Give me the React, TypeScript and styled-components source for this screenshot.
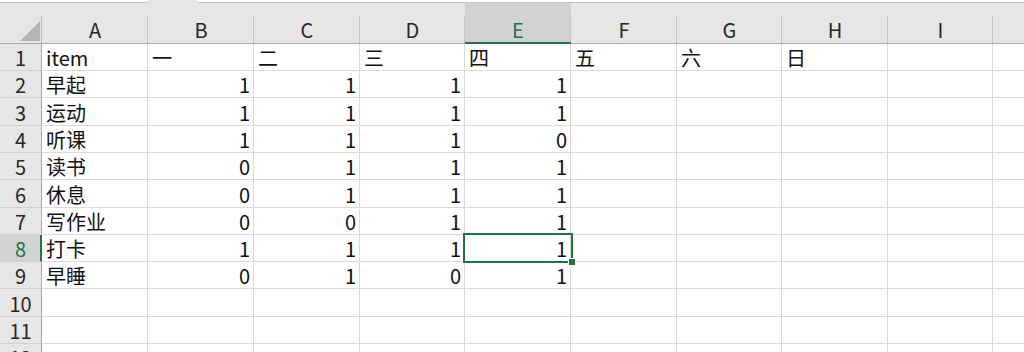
import React from 'react'
import styled, { createGlobalStyle } from 'styled-components'

const GlobalStyle = createGlobalStyle`
    html, body {
        margin: 0;
        padding: 0;
        background: #fff;
        overflow: hidden;
    }
    body {
        font-family: "Noto Sans CJK SC", "Noto Sans", sans-serif;
    }
`;

const GREEN = "#217346";

// last column only peeks in at the right edge, its letter is off screen
const colNames = ["A", "B", "C", "D", "E", "F", "G", "H", "I", ""];
const colWidths = [106, 106, 106, 105, 106, 106, 105, 106, 105, 106];
const rowHeights = [27, 27, 28, 27, 27, 28, 27, 27, 27, 28, 27, 27];

const selCol = 4;
const selRow = 7;

const data: (string | number)[][] = [
    ["item", "一", "二", "三", "四", "五", "六", "日"],
    ["早起", 1, 1, 1, 1],
    ["运动", 1, 1, 1, 1],
    ["听课", 1, 1, 1, 0],
    ["读书", 0, 1, 1, 1],
    ["休息", 0, 1, 1, 1],
    ["写作业", 0, 0, 1, 1],
    ["打卡", 1, 1, 1, 1],
    ["早睡", 0, 1, 0, 1],
];

const Page = styled.div`
    width: 1024px;
    height: 352px;
    overflow: hidden;
    background: #e6e6e6;
`;

const TopStrip = styled.div`
    display: flex;
    gap: 49px;
    height: 3px;
`;

const StripBox = styled.div<{ $w?: number }>`
    ${(p) => p.$w ? `width: ${p.$w}px;` : "flex: 1;"}
    height: 3px;
    box-sizing: border-box;
    background: #fff;
    border-bottom: 1px solid #c6c6c6;
`;

const HeaderRow = styled.div`
    display: flex;
    height: 41px;
    white-space: nowrap;
`;

const Corner = styled.div`
    flex: none;
    width: 42px;
    height: 100%;
    box-sizing: border-box;
    border-bottom: 1px solid #ababab;
    background: linear-gradient(#bcbcbc, #bcbcbc) right bottom / 1px 27px no-repeat, #e6e6e6;
    display: flex;
    align-items: flex-end;
    justify-content: flex-end;
    padding: 0 2px 2px 0;
`;

const ColHead = styled.div<{ $w: number; $sel?: boolean }>`
    flex: none;
    width: ${(p) => p.$w}px;
    height: 100%;
    box-sizing: border-box;
    border-bottom: ${(p) => p.$sel ? `2px solid ${GREEN}` : "1px solid #ababab"};
    background: linear-gradient(#c4c4c4, #c4c4c4) right bottom / 1px 27px no-repeat,
        ${(p) => p.$sel ? "#d2d2d2" : "#e6e6e6"};
    color: ${(p) => p.$sel ? GREEN : "#262626"};
    font-size: 20px;
    line-height: 24px;
    display: flex;
    align-items: flex-end;
    justify-content: center;
    padding-bottom: ${(p) => p.$sel ? 0 : 1}px;
`;

const Body = styled.div`
    position: relative;
`;

const Row = styled.div<{ $h: number }>`
    display: flex;
    height: ${(p) => p.$h}px;
    white-space: nowrap;
`;

const RowHead = styled.div<{ $sel?: boolean }>`
    flex: none;
    width: 42px;
    box-sizing: border-box;
    background: ${(p) => p.$sel ? "#d2d2d2" : "#e6e6e6"};
    border-right: ${(p) => p.$sel ? `2px solid ${GREEN}` : "1px solid #ababab"};
    border-bottom: 1px solid #d0d0d0;
    color: ${(p) => p.$sel ? GREEN : "#262626"};
    font-size: 20px;
    line-height: 24px;
    display: flex;
    align-items: flex-end;
    justify-content: center;
    padding-left: ${(p) => p.$sel ? 1 : 0}px;
`;

const Cell = styled.div<{ $w: number; $num?: boolean }>`
    flex: none;
    width: ${(p) => p.$w}px;
    box-sizing: border-box;
    background: #fff;
    border-right: 1px solid #dadada;
    border-bottom: 1px solid #dadada;
    color: #111;
    font-size: 20px;
    line-height: 24px;
    padding: 0 3px 0 4px;
    overflow: hidden;
    display: flex;
    align-items: flex-end;
    justify-content: ${(p) => p.$num ? "flex-end" : "flex-start"};
`;

const Selection = styled.div`
    position: absolute;
    box-sizing: border-box;
    border: 2px solid ${GREEN};
    pointer-events: none;
`;

const FillHandle = styled.div`
    position: absolute;
    width: 8px;
    height: 8px;
    box-sizing: border-box;
    background: ${GREEN};
    border: 1px solid #fff;
`;

const SelectAll = () => (
    <svg width="20" height="20" viewBox="0 0 20 20">
        <polygon points="20,0 20,20 0,20" fill="#b4b4b4" />
    </svg>
);

const sum = (arr: number[]) => arr.reduce((a, b) => a + b, 0);

export default function App() {
    const selLeft = 42 + sum(colWidths.slice(0, selCol)) - 2;
    const selTop = sum(rowHeights.slice(0, selRow)) - 2;
    const selW = colWidths[selCol] + 4;
    const selH = rowHeights[selRow] + 3;

    return (
        <Page>
            <GlobalStyle />
            <TopStrip>
                <StripBox $w={148} />
                <StripBox />
            </TopStrip>
            <HeaderRow>
                <Corner><SelectAll /></Corner>
                {colNames.map((c, i) => (
                    <ColHead key={i} $w={colWidths[i]} $sel={i === selCol}>{c}</ColHead>
                ))}
            </HeaderRow>
            <Body>
                {rowHeights.map((h, r) => (
                    <Row key={r} $h={h}>
                        <RowHead $sel={r === selRow}>{r + 1}</RowHead>
                        {colWidths.map((w, c) => {
                            const v = data[r] ? data[r][c] : undefined;
                            return (
                                <Cell key={c} $w={w} $num={typeof v === "number"}>
                                    {v !== undefined ? v : ""}
                                </Cell>
                            );
                        })}
                    </Row>
                ))}
                <Selection style={{ left: selLeft, top: selTop, width: selW, height: selH }} />
                <FillHandle style={{ left: selLeft + selW - 5, top: selTop + selH - 5 }} />
            </Body>
        </Page>
    );
}
